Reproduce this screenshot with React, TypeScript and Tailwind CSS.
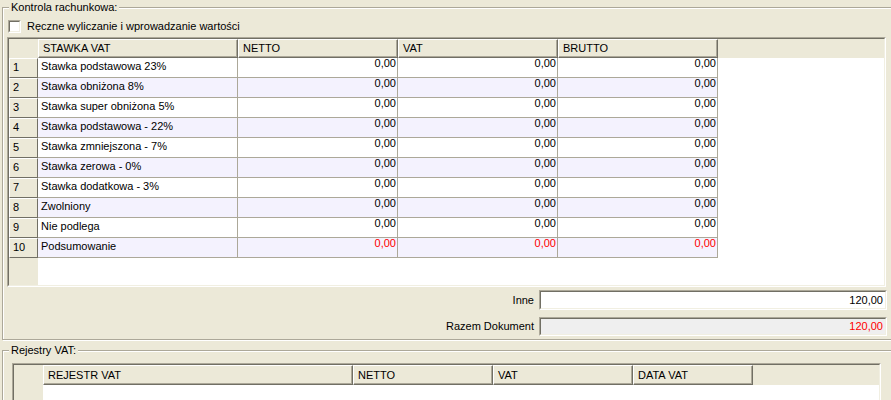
import React from 'react';

type Col = { label: string; w: string };

const taxCols: Col[] = [
  { label: 'STAWKA VAT', w: 'w-[200px]' },
  { label: 'NETTO', w: 'w-[160px]' },
  { label: 'VAT', w: 'w-[160px]' },
  { label: 'BRUTTO', w: 'w-[160px]' },
];

const regCols: Col[] = [
  { label: 'REJESTR VAT', w: 'w-[310px]' },
  { label: 'NETTO', w: 'w-[140px]' },
  { label: 'VAT', w: 'w-[140px]' },
  { label: 'DATA VAT', w: 'w-[120px]' },
];

const rates = [
  'Stawka podstawowa 23%',
  'Stawka obniżona 8%',
  'Stawka super obniżona 5%',
  'Stawka podstawowa - 22%',
  'Stawka zmniejszona - 7%',
  'Stawka zerowa - 0%',
  'Stawka dodatkowa - 3%',
  'Zwolniony',
  'Nie podlega',
  'Podsumowanie',
];

const HeaderCell: React.FC<{ col: Col }> = ({ col }) => (
  <div
    className={`${col.w} h-full shrink-0 flex items-center pl-[4px] bg-[#ECE9D8] border-t border-l border-r border-b border-t-white border-l-white border-r-[#716F64] border-b-[#716F64] shadow-[inset_-1px_-1px_0_#ACA899]`}
  >
    {col.label}
  </div>
);

// sunken frame used by grids and edit boxes
const Sunken: React.FC<{ className?: string; inner?: string; children?: React.ReactNode }> = ({
  className = '',
  inner = '',
  children,
}) => (
  <div className={`border border-t-[#ACA899] border-l-[#ACA899] border-r-white border-b-white ${className}`}>
    <div className={`h-full border border-t-[#716F64] border-l-[#716F64] border-r-[#F1EFE2] border-b-[#F1EFE2] ${inner}`}>
      {children}
    </div>
  </div>
);

const GroupBox: React.FC<{ title: string; className?: string; children?: React.ReactNode }> = ({
  title,
  className = '',
  children,
}) => (
  <div className={`relative ml-[2px] w-[900px] border border-[#ACA899] shadow-[1px_1px_0_#ffffff] ${className}`}>
    <div className="h-full border-t border-l border-white">{children}</div>
    {/* caption sits on the frame line */}
    <div className="absolute -top-[7px] left-[6px] px-[2px] leading-[13px] bg-[#ECE9D8]">{title}</div>
  </div>
);

export default function App() {
  return (
    <div className="w-[891px] h-[400px] overflow-hidden bg-[#ECE9D8] text-[11px] leading-[13px] text-black font-['Liberation_Sans',Arial,sans-serif]">
      <div className="h-[7px]" />
      <GroupBox title="Kontrola rachunkowa:" className="h-[333px]">
        <div className="pt-[10px] pl-[4px] flex items-center">
          <div className="w-[13px] h-[13px] border border-t-[#ACA899] border-l-[#ACA899] border-r-white border-b-white">
            <div className="h-full border border-t-[#716F64] border-l-[#716F64] border-r-[#F1EFE2] border-b-[#F1EFE2] bg-white" />
          </div>
          <span className="ml-[6px] pt-[1px]">Ręczne wyliczanie i wprowadzanie wartości</span>
        </div>

        <Sunken className="mt-[4px] ml-[3px] w-[879px] h-[250px]" inner="flex bg-white">
          {/* row indicator column */}
          <div className="w-[29px] shrink-0 flex flex-col bg-[#ECE9D8]">
            <div className="h-[19px] shrink-0" />
            {rates.map((_, i) => (
              <div
                key={i}
                className="h-[20px] shrink-0 pl-[3px] pt-[2px] border-t border-l border-r border-b border-t-white border-l-white border-r-[#716F64] border-b-[#716F64]"
              >
                {i + 1}
              </div>
            ))}
          </div>
          <div className="flex-1 flex flex-col">
            <div className="h-[19px] shrink-0 flex bg-[#ECE9D8]">
              {taxCols.map((c) => (
                <HeaderCell key={c.label} col={c} />
              ))}
            </div>
            {rates.map((name, i) => {
              const bg = i % 2 === 1 ? 'bg-[#F4F2FE]' : 'bg-white';
              const num = i === 9 ? 'text-[#FF0000]' : '';
              return (
                <div key={name} className={`h-[20px] shrink-0 flex ${bg}`}>
                  <div className="w-[200px] shrink-0 pl-[3px] pt-[2px] border-r border-b border-[#ACA899]">{name}</div>
                  {[0, 1, 2].map((k) => (
                    <div
                      key={k}
                      className={`w-[160px] shrink-0 text-right pr-[1px] leading-[11px] border-r border-b border-[#ACA899] ${num}`}
                    >
                      0,00
                    </div>
                  ))}
                  <div className="flex-1 bg-white" />
                </div>
              );
            })}
          </div>
        </Sunken>

        <div className="w-[883px] mt-[3px] flex justify-end items-center">
          <span>Inne</span>
          <Sunken className="ml-[5px] w-[348px] h-[20px]" inner="bg-white flex items-center justify-end pr-[2px]">
            120,00
          </Sunken>
        </div>
        <div className="w-[883px] mt-[7px] flex justify-end items-center">
          <span>Razem Dokument</span>
          <Sunken className="ml-[5px] w-[348px] h-[19px]" inner="bg-[#EFEFEF] flex items-center justify-end pr-[2px] text-[#FF0000]">
            120,00
          </Sunken>
        </div>
      </GroupBox>

      <GroupBox title="Rejestry VAT:" className="mt-[10px] h-[80px]">
        <div className="pt-[11px] pl-[8px]">
          <Sunken className="w-[869px] h-[60px]" inner="flex bg-white">
            <div className="w-[29px] shrink-0 bg-[#ECE9D8]" />
            <div className="flex-1 flex flex-col">
              <div className="h-[20px] shrink-0 flex bg-[#ECE9D8]">
                {regCols.map((c) => (
                  <HeaderCell key={c.label} col={c} />
                ))}
              </div>
            </div>
          </Sunken>
        </div>
      </GroupBox>
    </div>
  );
}
